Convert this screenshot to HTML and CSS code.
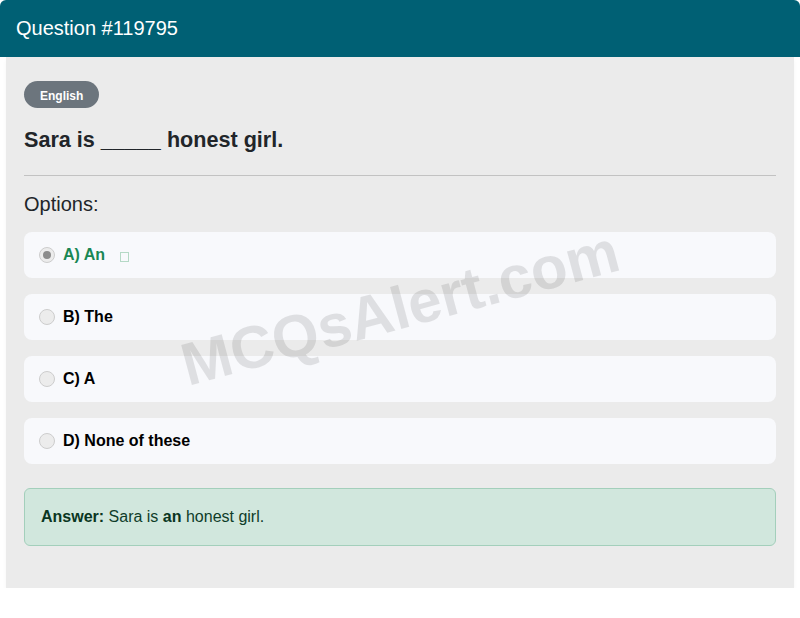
FILE: index.html
```html
<!DOCTYPE html>
<html lang="en">
<head>
<meta charset="utf-8">
<title>Question #119795</title>
<link rel="stylesheet" href="styles.css">
</head>
<body>
<div class="card">
  <div class="card-header">Question #119795</div>
  <div class="card-body">
    <span class="badge">English</span>
    <h1 class="question">Sara is _____ honest girl.</h1>
    <hr class="divider">
    <h2 class="options-title">Options:</h2>
    <div class="options">
      <div class="option correct">
        <span class="radio checked"></span>
        <span class="label">A) An</span>
        <span class="tick"></span>
      </div>
      <div class="option">
        <span class="radio"></span>
        <span class="label">B) The</span>
      </div>
      <div class="option">
        <span class="radio"></span>
        <span class="label">C) A</span>
      </div>
      <div class="option">
        <span class="radio"></span>
        <span class="label">D) None of these</span>
      </div>
    </div>
    <div class="answer"><strong>Answer:</strong> Sara is <strong>an</strong> honest girl.</div>
    <div class="watermark">MCQsAlert.com</div>
  </div>
</div>
</body>
</html>
```
FILE: styles.css
```css
* { box-sizing: border-box; }
html, body { margin: 0; padding: 0; background: #ffffff; }
body {
  font-family: "Liberation Sans", Arial, Helvetica, sans-serif;
  color: #212529;
}
.card { width: 800px; }
.card-header {
  height: 57px;
  background: #006074;
  color: #ffffff;
  font-size: 20px;
  line-height: 57px;
  padding: 0 16px;
  border-radius: 6px 6px 0 0;
}
.card-body {
  position: relative;
  margin: 0 6px;
  height: 531px;
  background: #ebebeb;
  padding: 24px 18px 0;
  overflow: hidden;
  box-shadow: 0 3px 4px rgba(0,0,0,0.04);
}
.badge {
  display: inline-block;
  height: 27px;
  line-height: 30px;
  padding: 0 16px;
  border-radius: 14px;
  background: #6c757d;
  color: #ffffff;
  font-size: 12px;
  font-weight: bold;
}
.question {
  margin: 19px 0 0;
  font-size: 21.6px;
  line-height: 26px;
  font-weight: bold;
}
.divider {
  margin: 22px 0 0;
  border: 0;
  border-top: 1px solid #c2c2c2;
  height: 0;
}
.options-title {
  margin: 16px 0 0;
  font-size: 20px;
  line-height: 24px;
  font-weight: normal;
}
.options {
  margin-top: 16px;
  display: flex;
  flex-direction: column;
  gap: 16px;
}
.option {
  height: 46px;
  background: #f8f9fc;
  border-radius: 8px;
  display: flex;
  align-items: center;
  padding-left: 15px;
}
.radio {
  width: 16px;
  height: 16px;
  border-radius: 50%;
  border: 1px solid #cdcdcd;
  background: #ececec;
  display: flex;
  align-items: center;
  justify-content: center;
  flex: none;
}
.radio.checked::after {
  content: "";
  width: 8px;
  height: 8px;
  border-radius: 50%;
  background: #8c8c8c;
}
.label {
  margin-left: 8px;
  font-size: 16px;
  font-weight: bold;
  color: #000000;
}
.option.correct .label { color: #198754; }
.tick {
  width: 9px;
  height: 10px;
  margin-left: 15px;
  margin-top: 4px;
  border: 1px solid #b5d9c6;
}
.answer {
  margin-top: 24px;
  height: 58px;
  background: #d1e7dd;
  border: 1px solid #a3cfbb;
  border-radius: 6px;
  padding: 0 16px;
  display: flex;
  align-items: center;
  font-size: 16px;
  color: #0f3d2a;
  white-space: pre;
}
.answer strong { color: #0a3622; }
.watermark {
  position: absolute;
  left: 394px;
  top: 251px;
  transform: translate(-50%, -50%) rotate(-15deg);
  font-size: 60px;
  font-weight: bold;
  color: rgba(0,0,0,0.1);
  white-space: nowrap;
  pointer-events: none;
}
```
